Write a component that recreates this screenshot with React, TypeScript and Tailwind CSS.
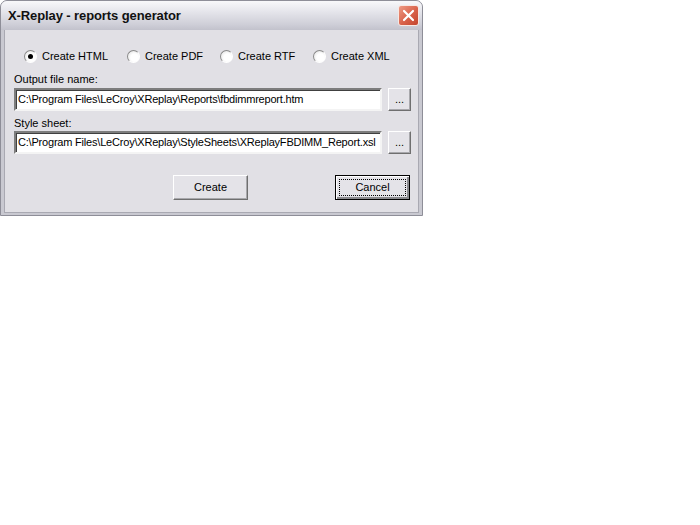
function Radio({ label, checked, width }: { label: string; checked?: boolean; width: string }) {
  return (
    <label className={`flex items-center gap-[5px] ${width}`}>
      <span className="flex h-[13px] w-[13px] items-center justify-center rounded-full border border-t-[#8a8a8a] border-l-[#8a8a8a] border-r-white border-b-white bg-[radial-gradient(circle_at_60%_60%,#ffffff_40%,#dcdcdc)]">
        {checked && <span className="h-[5px] w-[5px] rounded-full bg-black" />}
      </span>
      <span>{label}</span>
    </label>
  );
}

function PathField({ value }: { value: string }) {
  return (
    <div className="flex items-center gap-[6px]">
      <div className="flex h-[23px] w-[368px] items-center overflow-hidden whitespace-nowrap border-2 border-t-[#7d7d7d] border-l-[#7d7d7d] border-r-[#f4f4f4] border-b-[#f4f4f4] bg-white pl-[2px] tracking-[-0.2px] text-black shadow-[inset_1px_1px_0_#404040]">
        {value}
      </div>
      <button className="flex h-[23px] w-[23px] items-start justify-center border border-t-white border-l-white border-r-[#6f6f6f] border-b-[#6f6f6f] bg-[#e4e3e8] pt-[5px] leading-none shadow-[inset_-1px_-1px_0_#a8a8ac]">
        ...
      </button>
    </div>
  );
}

export default function App() {
  return (
    <div className="h-[525px] w-[700px] bg-white font-['Liberation_Sans',Arial,sans-serif] text-[11px] text-black">
      <div className="flex h-[216px] w-[423px] flex-col overflow-hidden rounded-t-[7px] border border-[#8e8e98] bg-[#c9c9d1]">
        {/* title bar */}
        <div className="flex h-[29px] shrink-0 items-center justify-between bg-[linear-gradient(to_bottom,#f8f8fa,#e6e6ec_35%,#cfcfd8_80%,#c2c2cc)] pl-[7px] pr-[3px]">
          <span className="text-[13px] font-bold tracking-[-0.1px] text-[#111]">X-Replay - reports generator</span>
          <button className="flex h-[21px] w-[21px] items-center justify-center rounded-[3px] border border-[#f6e8e4] bg-[linear-gradient(to_bottom_right,#ee9a84,#d8614a_55%,#c4452e)]">
            <svg width="13" height="13" viewBox="0 0 13 13">
              <path d="M2 2 L11 11 M11 2 L2 11" stroke="white" strokeWidth="2.2" strokeLinecap="round" />
            </svg>
          </button>
        </div>
        {/* body */}
        <div className="mx-[3px] mb-[2px] flex flex-1 flex-col border border-t-0 border-[#a9a9b2] bg-[#e1e0e5] pl-[9px]">
          <div className="mt-[19px] flex h-[14px] items-center pl-[10px]">
            <Radio label="Create HTML" checked width="w-[103px]" />
            <Radio label="Create PDF" width="w-[93px]" />
            <Radio label="Create RTF" width="w-[93px]" />
            <Radio label="Create XML" width="w-[93px]" />
          </div>
          <div className="mt-[10px] leading-[13px]">Output file name:</div>
          <div className="mt-[2px]">
            <PathField value="C:\Program Files\LeCroy\XReplay\Reports\fbdimmreport.htm" />
          </div>
          <div className="mt-[6px] leading-[13px]">Style sheet:</div>
          <div className="mt-[1px]">
            <PathField value="C:\Program Files\LeCroy\XReplay\StyleSheets\XReplayFBDIMM_Report.xsl" />
          </div>
          <div className="mt-[21px] flex">
            <button className="ml-[159px] h-[25px] w-[75px] border border-t-white border-l-white border-r-[#6f6f6f] border-b-[#6f6f6f] bg-[#e4e3e8] shadow-[inset_-1px_-1px_0_#a8a8ac]">
              Create
            </button>
            <button className="ml-[87px] flex h-[25px] w-[75px] items-center justify-center border border-black bg-[#e4e3e8] p-[3px] shadow-[inset_1px_1px_0_#ffffff,inset_-2px_-2px_0_#8a8a8e]">
              <span className="flex h-full w-full items-center justify-center border border-dotted border-black">Cancel</span>
            </button>
          </div>
        </div>
      </div>
    </div>
  );
}
